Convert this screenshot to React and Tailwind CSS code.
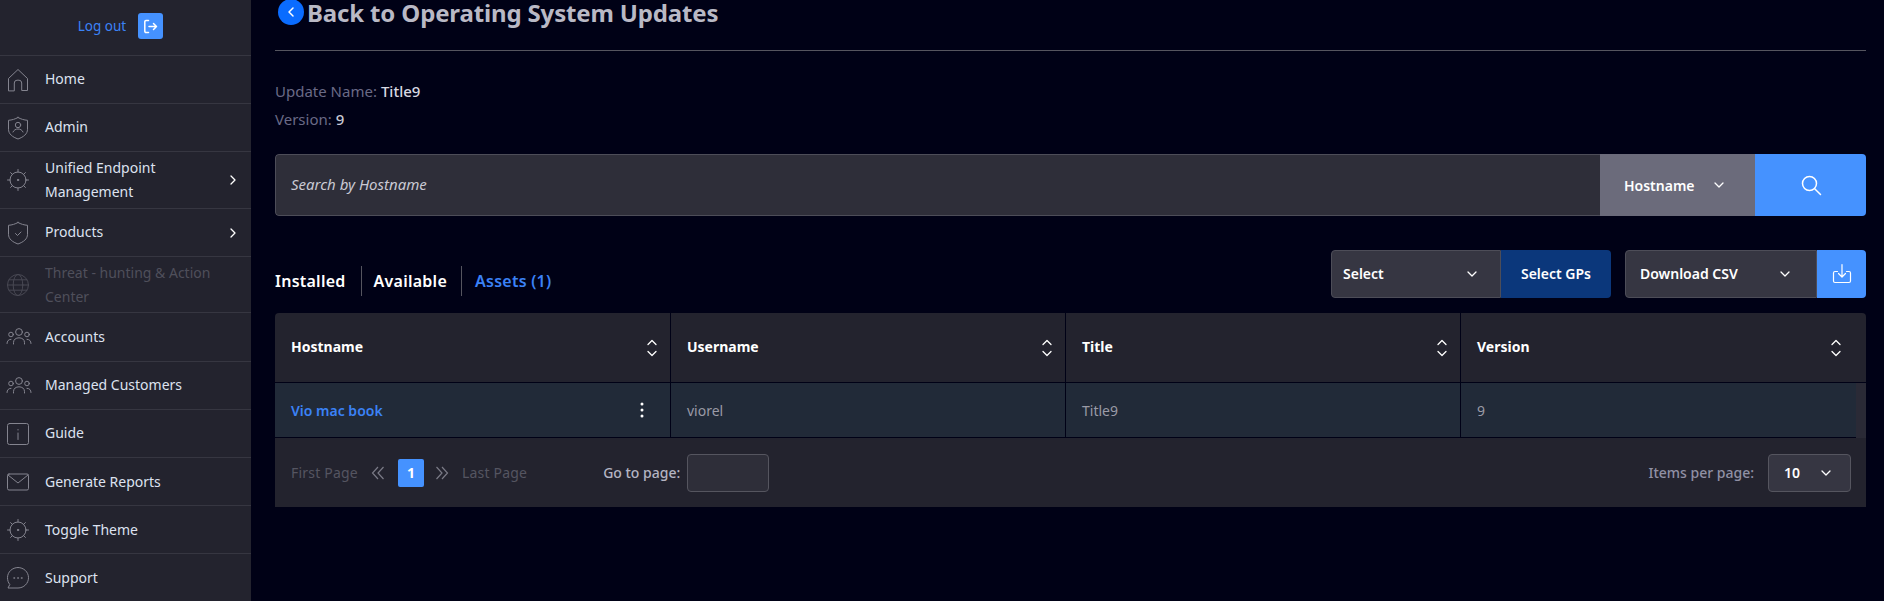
import React from "react";

const Ico = ({ children, w = 24, vb = "0 0 24 24" }) => (
  <svg width={w} height="24" viewBox={vb} fill="none" stroke="#84848f" strokeWidth="1" strokeLinecap="round" strokeLinejoin="round">
    {children}
  </svg>
);

const Gear = () => (
  <Ico>
    <circle cx="12" cy="12" r="8" />
    <circle cx="12" cy="12" r="0.7" fill="#8a8a94" />
    <path d="M12 1.500V4M12 20v2.500M1.500 12H4M20 12h2.500M4.600 4.600l1.800 1.800M17.600 17.600l1.800 1.800M4.600 19.400l1.800-1.800M17.600 6.400l1.800-1.800" />
  </Ico>
);
const Users = () => (
  <svg width="26" height="20" viewBox="0 0 26 20" fill="none" stroke="#84848f" strokeWidth="1" strokeLinecap="round">
    <circle cx="13" cy="5" r="3.400" />
    <circle cx="5" cy="7.500" r="2.300" />
    <circle cx="21" cy="7.500" r="2.300" />
    <path d="M7.500 17v-1.500c0-3 2.400-4.700 5.500-4.700s5.500 1.700 5.500 4.700V17" />
    <path d="M1 16.500c0-2.500 1.500-4.200 4-4.200M25 16.500c0-2.500-1.500-4.200-4-4.200" />
  </svg>
);

const items = [
  { t: "Home", h: "h-[48px]", up: true, i: <Ico><path d="M2.500 22.500V10.500L12 1.500l9.500 9v12h-5.800v-7.500a2.800 2.800 0 0 0-2.700-2.800h-2a2.800 2.800 0 0 0-2.700 2.800v7.500z" /></Ico> },
  { t: "Admin", h: "h-[48px]", up: true, i: <Ico><path d="M12 1.500c3 1.700 6 2.500 9.500 2.800v9c0 4.700-4 7.700-9.500 9.700-5.500-2-9.500-5-9.500-9.700v-9C6 4 9 3.200 12 1.500z" /><circle cx="12" cy="9" r="2.700" /><path d="M7 16c.8-2 2.800-3 5-3s4.200 1 5 3" /></Ico> },
  { t: "Unified Endpoint Management", h: "h-[57px]", i: <Gear />, arrow: true },
  { t: "Products", h: "h-[48px]", up: true, i: <Ico><path d="M12 1.500c3 1.700 6 2.500 9.500 2.800v9c0 4.700-4 7.700-9.500 9.700-5.500-2-9.500-5-9.500-9.700v-9C6 4 9 3.200 12 1.500z" /><path d="M9.500 12.500l2 2 3.500-3.500" /></Ico>, arrow: true },
  { t: "Threat - hunting & Action Center", h: "h-[56px]", dim: true, i: <Ico><g stroke="#484853"><circle cx="12" cy="12" r="10.500" /><ellipse cx="12" cy="12" rx="4.800" ry="10.500" /><path d="M1.500 12h21M3 6.800h18M3 17.200h18" /></g></Ico> },
  { t: "Accounts", h: "h-[49px]", i: <Users /> },
  { t: "Managed Customers", h: "h-[48px]", up: true, i: <Users /> },
  { t: "Guide", h: "h-[48px]", up: true, i: <Ico><rect x="1.500" y="1.500" width="21" height="21" rx="2" /><path d="M12 11v6.500M12 7.500v.5" /></Ico> },
  { t: "Generate Reports", h: "h-[48px]", i: <Ico><rect x="1.500" y="4" width="21" height="16" rx="1.500" /><path d="M2 5l10 8 10-8" /></Ico> },
  { t: "Toggle Theme", h: "h-[48px]", i: <Gear /> },
  { t: "Support", h: "h-[48px]", last: true, i: <Ico><path d="M12 1.500c5.800 0 10.500 4.500 10.500 10.200S17.800 22 12 22H2l1.800-3.500C2.300 16.700 1.500 14.300 1.500 11.700 1.500 6 6.200 1.500 12 1.500z" /><path d="M8 12h.5M11.800 12h.5M15.500 12h.5" strokeWidth="1.500" /></Ico> },
];

const Down = ({ className = "" }) => (
  <svg className={className} width="12" height="8" viewBox="0 0 12 8" fill="none" stroke="#fff" strokeWidth="1.300" strokeLinecap="round" strokeLinejoin="round">
    <path d="M2 2l4 4 4-4" />
  </svg>
);

const Sort = () => (
  <svg width="12" height="20" viewBox="0 0 12 20" fill="none" stroke="#fff" strokeWidth="1.300" strokeLinecap="round" strokeLinejoin="round">
    <path d="M2 6.500L6 2.500l4 4M2 13.500l4 4 4-4" />
  </svg>
);

const Sidebar = () => (
  <aside className="w-[251px] shrink-0 h-[601px] bg-[#23232e] overflow-hidden">
    <div className="h-[56px] border-b border-[#363641] flex items-center justify-center gap-[12px] pr-[10px] pb-[3px]">
      <span className="text-[13.5px] text-[#3b82f6]">Log out</span>
      <span className="w-[25px] h-[26px] rounded-[3px] bg-[#4592ff] flex items-center justify-center">
        <svg width="15" height="15" viewBox="0 0 15 15" fill="none" stroke="#fff" strokeWidth="1.500" strokeLinecap="round" strokeLinejoin="round">
          <path d="M5.500 1.500H3a1.200 1.200 0 0 0-1.200 1.200v9.600A1.200 1.200 0 0 0 3 13.500h2.500M6 7.500h7.500M10.500 4.500l3 3-3 3" />
        </svg>
      </span>
    </div>
    {items.map((it) => (
      <div key={it.t} className={`${it.h} ${it.last ? "" : "border-b border-[#363641]"} flex items-center pl-[6px] pr-[13px]`}>
        <span className="w-[39px] shrink-0 flex items-center">{it.i}</span>
        <span className={`flex-1 text-[14px] leading-[24px] ${it.up ? "pb-[2px]" : ""} ${it.dim ? "text-[#4f4f5b]" : "text-[#dde2f0]"}`}>{it.t}</span>
        {it.arrow && (
          <svg width="10" height="12" viewBox="0 0 10 12" fill="none" stroke="#fff" strokeWidth="1.300" strokeLinecap="round" strokeLinejoin="round">
            <path d="M3 2l4 4-4 4" />
          </svg>
        )}
      </div>
    ))}
  </aside>
);

const HeadCell = ({ t, last }) => (
  <div className={`flex items-center justify-between pl-[16px] ${last ? "pr-[24px]" : "pr-[12px] border-r border-[#000116]"}`}>
    <span className="text-[14px] font-bold text-white pb-[2px]">{t}</span>
    <Sort />
  </div>
);

const Cell = ({ children, last }) => (
  <div className={`flex items-center justify-between pl-[16px] text-[14px] text-[#9a9aa6] ${last ? "" : "border-r border-[#000116]"}`}>
    {children}
  </div>
);

export default function App() {
  return (
    <div className="flex h-[601px] overflow-hidden bg-[#000116]" style={{ fontFamily: '"Noto Sans", sans-serif' }}>
      <Sidebar />
      <main className="flex-1 pl-[24px] pr-[18px]">
        <div className="h-[51px] border-b border-[#55555f] flex items-start">
          <span className="-mt-px ml-[3px] w-[26px] h-[26px] rounded-full bg-[#0a6cff] flex items-center justify-center shrink-0">
            <svg width="10" height="12" viewBox="0 0 10 12" fill="none" stroke="#fff" strokeWidth="1.500" strokeLinecap="round" strokeLinejoin="round">
              <path d="M7 2L3 6l4 4" />
            </svg>
          </span>
          <span className="ml-[3px] text-[24px] leading-[25px] tracking-[-0.15px] font-bold text-[#b9b9c5]">Back to Operating System Updates</span>
        </div>

        <div className="mt-[30px] text-[15px] leading-[20px] flex gap-[4px]">
          <span className="text-[#6a6a86]">Update Name:</span>
          <span className="text-[#d8d8e2] font-medium">Title9</span>
        </div>
        <div className="mt-[8px] text-[15px] leading-[20px] flex gap-[4px]">
          <span className="text-[#6a6a86]">Version:</span>
          <span className="text-[#c8c8d4] font-medium">9</span>
        </div>

        <div className="mt-[25px] h-[62px] flex rounded-[4px] overflow-hidden">
          <div className="flex-1 bg-[#2e2e39] border border-r-0 border-[#4d4d58] rounded-l-[4px] flex items-center pl-[15px] pb-[2px] text-[15px] italic text-[#c9c9d3]">
            Search by Hostname
          </div>
          <div className="w-[155px] bg-[#6b6b7b] flex items-center pl-[24px] gap-[18px] text-[14px] font-semibold text-white">
            Hostname
            <Down />
          </div>
          <div className="w-[111px] bg-[#4592ff] flex items-center justify-center">
            <svg width="22" height="22" viewBox="0 0 22 22" fill="none" stroke="#fff" strokeWidth="1.500" strokeLinecap="round">
              <circle cx="9.500" cy="9.500" r="7" />
              <path d="M14.700 14.700L20.500 20.500" />
            </svg>
          </div>
        </div>

        <div className="mt-[34px] h-[48px] flex items-center">
          <div className="mt-[14px] flex items-center text-[16px] tracking-[0.25px] font-semibold">
            <span className="text-white pr-[15px] border-r border-[#55555f] h-[30px] leading-[30px]">Installed</span>
            <span className="text-white pl-[12px] pr-[14px] border-r border-[#55555f] h-[30px] leading-[30px]">Available</span>
            <span className="text-[#3b82f6] pl-[13px] h-[30px] leading-[30px]">Assets (1)</span>
          </div>
          <div className="ml-auto flex">
            <div className="w-[170px] h-[48px] bg-[#363642] border border-[#4d4d58] rounded-l-[4px] flex items-center justify-between pl-[11px] pr-[22px] pb-[1px] text-[14px] font-semibold text-white">
              Select
              <Down />
            </div>
            <div className="w-[110px] h-[48px] bg-[#0b377b] rounded-r-[4px] flex items-center justify-center pb-[1px] text-[14px] font-semibold text-white">
              Select GPs
            </div>
            <div className="ml-[14px] w-[192px] h-[48px] bg-[#363642] border border-[#4d4d58] rounded-l-[4px] flex items-center justify-between pl-[14px] pr-[25px] pb-[1px] text-[14px] font-semibold text-white">
              Download CSV
              <Down />
            </div>
            <div className="w-[49px] h-[48px] bg-[#4592ff] rounded-r-[4px] flex items-center justify-center">
              <svg width="20" height="22" viewBox="0 0 20 22" fill="none" stroke="#fff" strokeWidth="1.200" strokeLinecap="round" strokeLinejoin="round">
                <path d="M5.500 8.500H3A1.500 1.500 0 0 0 1.500 10v8A1.500 1.500 0 0 0 3 19.500h14a1.500 1.500 0 0 0 1.500-1.500v-8A1.500 1.500 0 0 0 17 8.500h-2.500" />
                <path d="M10 1.500v12M6.500 10.500l3.500 3.500 3.500-3.500" />
              </svg>
            </div>
          </div>
        </div>

        <div className="mt-[15px] rounded-t-[4px] overflow-hidden bg-[#23232e]">
          <div className="grid grid-cols-[396px_395px_395px_1fr] h-[70px] border-b border-[#000116]">
            <HeadCell t="Hostname" />
            <HeadCell t="Username" />
            <HeadCell t="Title" />
            <HeadCell t="Version" last />
          </div>
          <div className="flex h-[55px]">
            <div className="flex-1 grid grid-cols-[396px_395px_395px_1fr] bg-[#212a38] border-b border-[#000116]">
              <Cell>
                <span className="text-[#3b82f6] font-semibold">Vio mac book</span>
                <svg className="mr-[26px]" width="4" height="18" viewBox="0 0 4 18" fill="#fff">
                  <circle cx="2" cy="3" r="1.500" />
                  <circle cx="2" cy="9" r="1.500" />
                  <circle cx="2" cy="15" r="1.500" />
                </svg>
              </Cell>
              <Cell>viorel</Cell>
              <Cell>Title9</Cell>
              <Cell last>9</Cell>
            </div>
            <div className="w-[10px] bg-[#2a2a36]" />
          </div>
          <div className="h-[69px] flex items-center pl-[16px] pr-[15px] text-[14px]">
            <span className="text-[#555561] tracking-[0.2px]">First Page</span>
            <svg className="ml-[12px]" width="16" height="16" viewBox="0 0 16 16" fill="none" stroke="#7a7a86" strokeWidth="1.200">
              <path d="M8 2L2.500 8 8 14M13.500 2L8 8l5.500 6" />
            </svg>
            <span className="ml-[12px] w-[26px] h-[28px] rounded-[2px] bg-[#4592ff] flex items-center justify-center text-white font-bold text-[14px]">1</span>
            <svg className="ml-[10px]" width="16" height="16" viewBox="0 0 16 16" fill="none" stroke="#7a7a86" strokeWidth="1.200">
              <path d="M2.500 2L8 8l-5.500 6M8 2l5.500 6L8 14" />
            </svg>
            <span className="ml-[12px] text-[#555561] tracking-[0.2px]">Last Page</span>
            <span className="ml-[76px] text-[#b4b4c2] font-medium">Go to page:</span>
            <span className="ml-[7px] w-[82px] h-[38px] rounded-[4px] bg-[#2e2e39] border border-[#55555f]" />
            <span className="ml-auto text-[#9090a4] font-medium">Items per page:</span>
            <div className="ml-[14px] w-[83px] h-[38px] rounded-[4px] bg-[#363642] border border-[#55555f] flex items-center pl-[15px] gap-[20px] text-white font-semibold">
              10
              <Down />
            </div>
          </div>
        </div>
      </main>
    </div>
  );
}
